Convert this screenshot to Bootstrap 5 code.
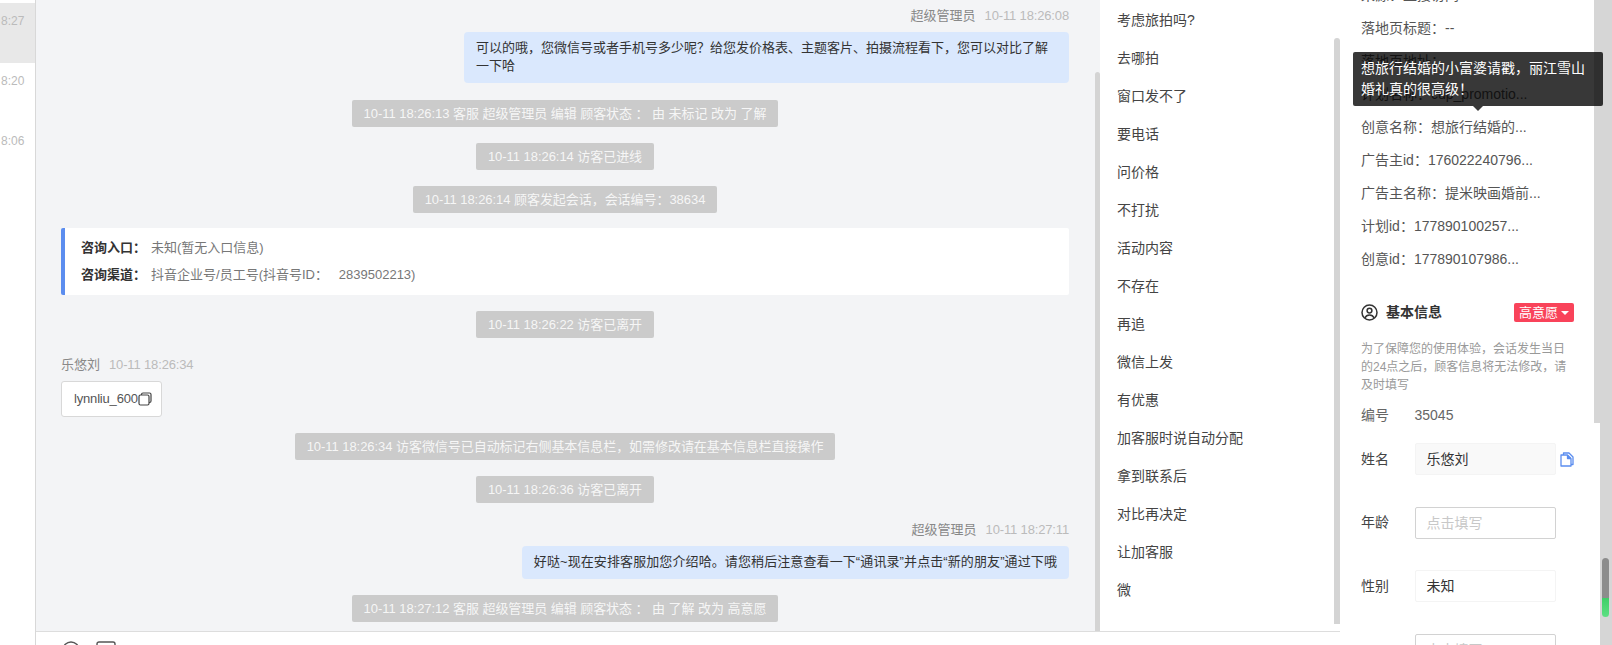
<!DOCTYPE html>
<html lang="zh-CN">
<head>
    <meta charset="UTF-8" />
    <meta name="viewport" content="width=device-width, initial-scale=1" />
    <title>客服会话</title>
    <link href="https://cdn.jsdelivr.net/npm/bootstrap@5.3.0/dist/css/bootstrap.min.css" rel="stylesheet" />
    <style>
    html, body { height: 100%; overflow: hidden; }
    body {
        font-family: "Liberation Sans", "Noto Sans CJK SC", sans-serif;
        font-size: 13px;
        color: #333;
        background: #fff;
    }
    .app-shell { height: 645px; }

    /* 会话列表 */
    .session-col { width: 36px; border-right: 1px solid #d8d8d8; padding-top: 3px; }
    .session-item { height: 60px; padding: 10px 0 0 1px; color: #bbb; font-size: 12px; line-height: 16px; white-space: nowrap; overflow: hidden; }
    .session-item.active { background: #e8e8e8; }

    .center-col { width: 1304px; }
    .center-top { height: 632px; border-bottom: 1px solid #ddd; }

    /* 聊天区 */
    .chat-col { width: 1064px; background: #f3f4f6; position: relative; overflow: hidden; }
    .chat-flow { padding: 7px 31px 0 25px; }
    .msg-meta { height: 18px; line-height: 18px; margin-bottom: 7px; color: #888; }
    .msg-meta .msg-time { color: #bbb; margin-left: 9px; letter-spacing: -.15px; }
    .meta-gap { margin-top: 18px; }
    .msg-bubble { background: #dae8fd; color: #333; line-height: 18px; padding: 7px 12px 8px; border-radius: 4px; max-width: 605px; margin-bottom: 17px; }
    .bubble-wide { letter-spacing: .1px; margin-bottom: 16px; }
    .sys-note { background: #cbcbcb; color: rgba(255,255,255,.85); height: 27px; line-height: 27px; padding: 0 12px; margin-bottom: 16px; border-radius: 2px; letter-spacing: -.05px; }
    .entry-box { background: #fff; border-left: 4px solid #5b8def; border-radius: 2px; height: 67px; padding: 6px 0 0 16px; margin-top: -1px; margin-bottom: 16px; color: #777; line-height: 27px; }
    .entry-box b { color: #333; margin-right: 5px; }
    .wx-card { background: #fff; border: 1px solid #d8d8d8; border-radius: 3px; height: 36px; width: 101px; padding-left: 12px; margin-bottom: 16px; color: #555; letter-spacing: -.18px; }
    .bar-v { position: absolute; background: #d4d4d4; width: 6px; border-radius: 3px 3px 0 0; }
    .chat-bar { top: 72px; bottom: 0; right: 0; width: 5px; }

    /* 快捷回复 */
    .quick-col { width: 240px; position: relative; padding: 1px 0 0 17px; overflow: hidden; }
    .quick-item { height: 38px; line-height: 38px; font-size: 14px; color: #444; }
    .quick-bar { top: 38px; bottom: 7px; right: 0; }

    .tool-row { padding: 9px 0 0 26px; }

    /* 右侧信息 */
    .info-col { width: 272px; position: relative; overflow: hidden; }
    .info-flow { margin-top: -21px; padding: 0 0 0 21px; width: 254px; }
    .info-row { height: 33px; line-height: 33px; font-size: 14px; color: #555; white-space: nowrap; }
    .info-head { margin-top: 26px; height: 20px; }
    .info-head span { font-size: 14px; font-weight: 700; color: #333; }
    .intent-tag { margin-left: auto; width: 60px; height: 19px; background: #f9435a; color: #fff; border-radius: 2px; font-size: 13px; line-height: 19px; text-align: center; margin-right: 20px; }
    .intent-caret { display: inline-block; border: 4px solid transparent; border-top-color: #fff; border-bottom: 0; vertical-align: 2px; margin-left: 3px; }
    .info-tip { margin-top: 18px; font-size: 12px; line-height: 18px; color: #999; max-width: 212px; }
    .field-row { height: 32px; margin-bottom: 31.5px; font-size: 14px; color: #444; }
    .field-name { width: 53.5px; flex: none; }
    .field-box { width: 141px; height: 32px; line-height: 30px; padding-left: 11px; border: 1px solid #f4f4f4; border-radius: 2px; color: #333; }
    .field-box.is-locked { background: #f9f9f9; }
    .field-box.is-empty { border-color: #d2d2d2; color: #c8c8c8; }
    .code-row { height: 18px; line-height: 18px; margin-top: 12px; margin-bottom: 19px; font-size: 14px; color: #666; }

    .inner-track { position: absolute; right: 12px; top: 0; width: 6px; height: 423px; background: #d6d6d6; }
    .outer-track { position: absolute; right: 0; top: 0; bottom: 0; width: 12px; background: #d6d6d6; }
    .outer-thumb { position: absolute; left: 2px; top: 558px; width: 7px; height: 59px; border-radius: 4px; background: linear-gradient(#8c8c8c 67%, #3ecf68 68%, #5ee083); }

    .ad-tooltip { position: absolute; z-index: 5; left: 13px; top: 52px; width: 250px; height: 54px; padding: 6px 8px; background: rgba(0,0,0,.78); color: #fff; font-size: 14px; line-height: 21px; border-radius: 2px; }
    .ad-tooltip::after { content: ""; position: absolute; left: 120px; top: 100%; border: 5px solid transparent; border-top-color: rgba(0,0,0,.78); border-bottom: 0; }
    </style>
</head>
<body>
<div class="app-shell d-flex">
    <!-- 会话列表 -->
    <div class="session-col flex-shrink-0">
        <div class="session-item active">8:27</div>
        <div class="session-item">8:20</div>
        <div class="session-item">8:06</div>
    </div>

    <div class="center-col flex-shrink-0 d-flex flex-column">
        <div class="center-top d-flex">
            <!-- 聊天记录 -->
            <div class="chat-col">
                <div class="chat-flow">
                    <div class="msg-meta text-end">超级管理员<span class="msg-time">10-11 18:26:08</span></div>
                    <div class="d-flex justify-content-end"><div class="msg-bubble">可以的哦，您微信号或者手机号多少呢？给您发价格表、主题客片、拍摄流程看下，您可以对比了解一下哈</div></div>
                    <div class="d-flex justify-content-center"><div class="sys-note">10-11 18:26:13 客服 超级管理员 编辑 顾客状态 ： 由 未标记 改为 了解</div></div>
                    <div class="d-flex justify-content-center"><div class="sys-note">10-11 18:26:14 访客已进线</div></div>
                    <div class="d-flex justify-content-center"><div class="sys-note">10-11 18:26:14 顾客发起会话，会话编号：38634</div></div>
                    <div class="entry-box">
                        <div><b>咨询入口：</b>未知(暂无入口信息)</div>
                        <div><b>咨询渠道：</b>抖音企业号/员工号(抖音号ID：&nbsp;&nbsp;&nbsp;2839502213)</div>
                    </div>
                    <div class="d-flex justify-content-center"><div class="sys-note mb-0">10-11 18:26:22 访客已离开</div></div>
                    <div class="msg-meta meta-gap">乐悠刘<span class="msg-time">10-11 18:26:34</span></div>
                    <div class="wx-card d-flex align-items-center">lynnliu_600
                        <svg width="14" height="14" viewBox="0 0 14 14" fill="none" stroke="#444" stroke-width="1.2"><rect x="1" y="3" width="10" height="10" rx="1.5"/><path d="M3.5 3V2.500A1.500 1.500 0 0 1 5 1h6.500A1.500 1.500 0 0 1 13 2.500V9a1.500 1.500 0 0 1-1.500 1.500H11"/></svg>
                    </div>
                    <div class="d-flex justify-content-center"><div class="sys-note">10-11 18:26:34 访客微信号已自动标记右侧基本信息栏，如需修改请在基本信息栏直接操作</div></div>
                    <div class="d-flex justify-content-center"><div class="sys-note mb-0">10-11 18:26:36 访客已离开</div></div>
                    <div class="msg-meta meta-gap text-end">超级管理员<span class="msg-time">10-11 18:27:11</span></div>
                    <div class="d-flex justify-content-end"><div class="msg-bubble bubble-wide">好哒~现在安排客服加您介绍哈。请您稍后注意查看一下“通讯录”并点击“新的朋友”通过下哦</div></div>
                    <div class="d-flex justify-content-center"><div class="sys-note">10-11 18:27:12 客服 超级管理员 编辑 顾客状态 ： 由 了解 改为 高意愿</div></div>
                </div>
                <div class="bar-v chat-bar"></div>
            </div>

            <!-- 快捷回复 -->
            <div class="quick-col">
                <div class="quick-item">考虑旅拍吗?</div>
                <div class="quick-item">去哪拍</div>
                <div class="quick-item">窗口发不了</div>
                <div class="quick-item">要电话</div>
                <div class="quick-item">问价格</div>
                <div class="quick-item">不打扰</div>
                <div class="quick-item">活动内容</div>
                <div class="quick-item">不存在</div>
                <div class="quick-item">再追</div>
                <div class="quick-item">微信上发</div>
                <div class="quick-item">有优惠</div>
                <div class="quick-item">加客服时说自动分配</div>
                <div class="quick-item">拿到联系后</div>
                <div class="quick-item">对比再决定</div>
                <div class="quick-item">让加客服</div>
                <div class="quick-item">微</div>
                <div class="bar-v quick-bar"></div>
            </div>
        </div>

        <!-- 输入框工具栏 -->
        <div class="tool-row d-flex gap-3">
            <svg width="18" height="18" viewBox="0 0 18 18" fill="none" stroke="#555" stroke-width="1.4"><circle cx="9" cy="9" r="8"/></svg>
            <svg width="20" height="18" viewBox="0 0 20 18" fill="none" stroke="#555" stroke-width="1.4"><rect x="1" y="1" width="18" height="16" rx="2"/></svg>
        </div>
    </div>

    <!-- 右侧信息 -->
    <div class="info-col flex-shrink-0">
        <div class="info-flow">
            <div class="info-row">来源：直接访问</div>
            <div class="info-row">落地页标题：--</div>
            <div class="info-row">落地页地址：</div>
            <div class="info-row">计划名称：cup_promotio...</div>
            <div class="info-row">创意名称：想旅行结婚的...</div>
            <div class="info-row">广告主id：176022240796...</div>
            <div class="info-row">广告主名称：提米映画婚前...</div>
            <div class="info-row">计划id：177890100257...</div>
            <div class="info-row">创意id：177890107986...</div>

            <div class="info-head d-flex align-items-center gap-2">
                <svg width="17" height="17" viewBox="0 0 17 17" fill="none" stroke="#333" stroke-width="1.5"><circle cx="8.500" cy="8.500" r="7.500"/><circle cx="8.500" cy="6.600" r="2.400"/><path d="M3.900 14c.9-2 2.600-3 4.600-3s3.700 1 4.600 3"/></svg>
                <span>基本信息</span>
                <div class="intent-tag">高意愿<i class="intent-caret"></i></div>
            </div>
            <div class="info-tip">为了保障您的使用体验，会话发生当日的24点之后，顾客信息将无法修改，请及时填写</div>
            <div class="code-row d-flex"><div class="field-name">编号</div><div>35045</div></div>

            <div class="field-row d-flex align-items-center">
                <div class="field-name">姓名</div>
                <div class="field-box is-locked">乐悠刘</div>
                <svg class="ms-1" width="14" height="15" viewBox="0 0 14 15" fill="none" stroke="#5b8def" stroke-width="1.300" stroke-linejoin="round"><path d="M3.500 3V1H9l4 4v7.500h-2"/><path d="M1 3h6.500L11 6.500V14H1z"/><path d="M7.500 3v3.500H11" fill="#5b8def"/></svg>
            </div>
            <div class="field-row d-flex align-items-center">
                <div class="field-name">年龄</div>
                <div class="field-box is-empty">点击填写</div>
            </div>
            <div class="field-row d-flex align-items-center">
                <div class="field-name">性别</div>
                <div class="field-box">未知</div>
            </div>
            <div class="field-row d-flex align-items-center">
                <div class="field-name"></div>
                <div class="field-box is-empty">点击填写</div>
            </div>
        </div>
        <div class="ad-tooltip">想旅行结婚的小富婆请戳，丽江雪山婚礼真的很高级！</div>
        <div class="inner-track"></div>
        <div class="outer-track"><div class="outer-thumb"></div></div>
    </div>
</div>
<script src="https://cdn.jsdelivr.net/npm/bootstrap@5.3.0/dist/js/bootstrap.bundle.min.js"></script>
</body>
</html>
